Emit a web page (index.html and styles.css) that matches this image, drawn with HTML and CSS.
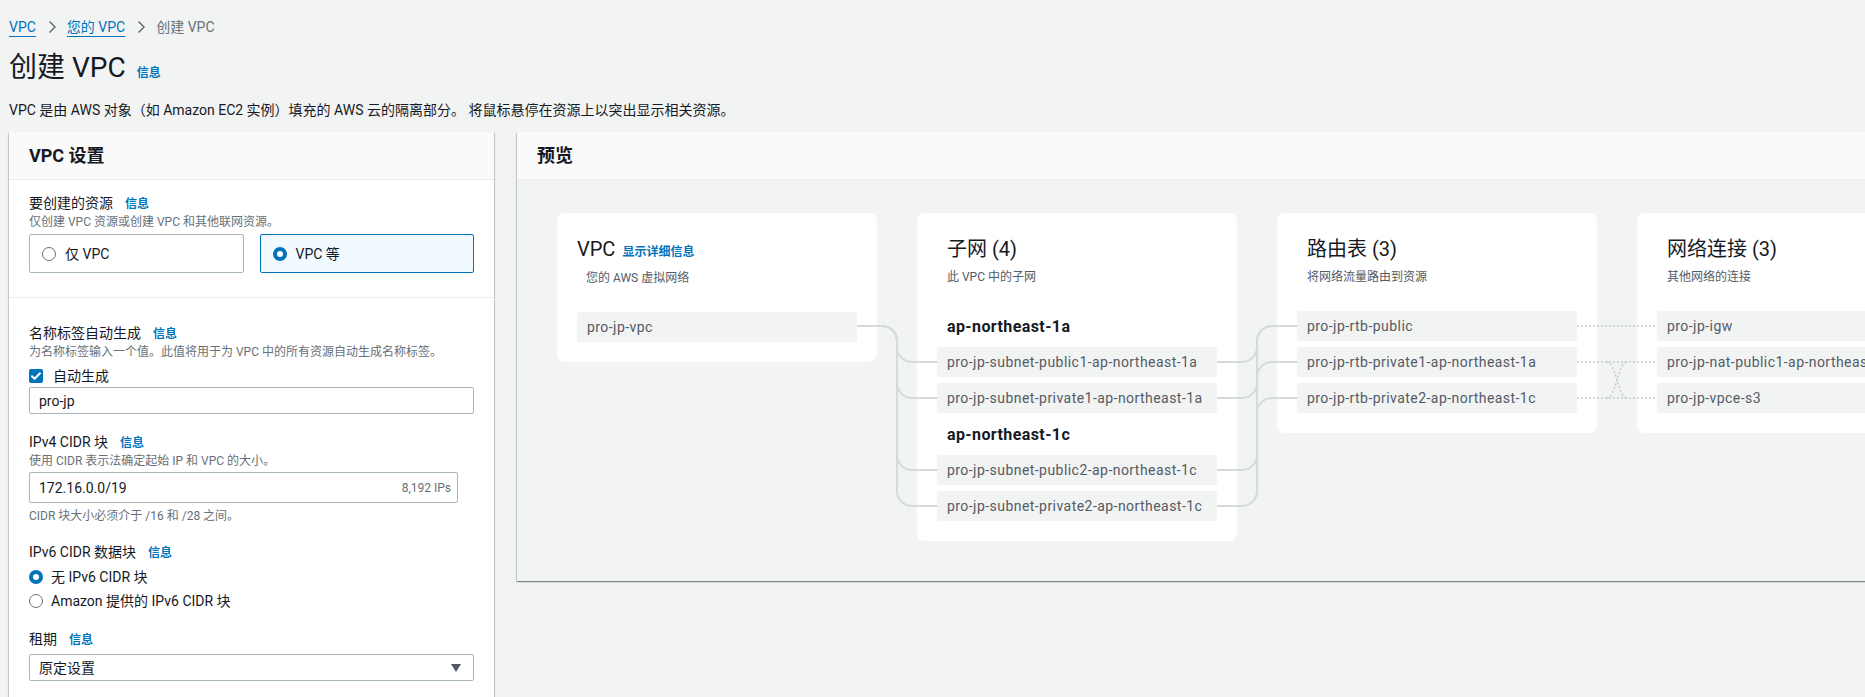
FILE: index.html
```html
<!DOCTYPE html>
<html lang="zh-CN">
<head>
<meta charset="utf-8">
<title>创建 VPC</title>
<link rel="stylesheet" href="styles.css">
</head>
<body>
<div class="page">
  <nav class="crumbs">
    <a class="crumb-link">VPC</a>
    <svg class="chev" width="16" height="16" viewBox="0 0 16 16"><path d="M5.5 2.5l5.5 5.5-5.5 5.5"/></svg>
    <a class="crumb-link">您的 VPC</a>
    <svg class="chev" width="16" height="16" viewBox="0 0 16 16"><path d="M5.5 2.5l5.5 5.5-5.5 5.5"/></svg>
    <span class="crumb-current">创建 VPC</span>
  </nav>
  <div class="title-row">
    <h1 class="title">创建 VPC</h1>
    <a class="info">信息</a>
  </div>
  <p class="desc">VPC 是由 AWS 对象（如 Amazon EC2 实例）填充的 AWS 云的隔离部分。 将鼠标悬停在资源上以突出显示相关资源。</p>

  <div class="columns">
    <section class="panel settings">
      <header class="panel-head"><h2 class="panel-title">VPC 设置</h2></header>
      <div class="section first">
        <div class="label">要创建的资源<a class="info">信息</a></div>
        <div class="hint">仅创建 VPC 资源或创建 VPC 和其他联网资源。</div>
        <div class="tiles">
          <div class="tile"><span class="radio"></span><span>仅 VPC</span></div>
          <div class="tile selected"><span class="radio on"></span><span>VPC 等</span></div>
        </div>
      </div>
      <div class="section second">
        <div class="label">名称标签自动生成<a class="info">信息</a></div>
        <div class="hint">为名称标签输入一个值。此值将用于为 VPC 中的所有资源自动生成名称标签。</div>
        <div class="check-row">
          <span class="checkbox"><svg width="14" height="14" viewBox="0 0 14 14"><path d="M3 7.2l2.6 2.6L11 4.2"/></svg></span>
          <span>自动生成</span>
        </div>
        <div class="input name-input">pro-jp</div>

        <div class="label gap">IPv4 CIDR 块<a class="info">信息</a></div>
        <div class="hint">使用 CIDR 表示法确定起始 IP 和 VPC 的大小。</div>
        <div class="input cidr-input"><span>172.16.0.0/19</span><span class="ips">8,192 IPs</span></div>
        <div class="hint constraint">CIDR 块大小必须介于 /16 和 /28 之间。</div>

        <div class="label gap">IPv6 CIDR 数据块<a class="info">信息</a></div>
        <div class="radio-row first-radio"><span class="radio on"></span><span>无 IPv6 CIDR 块</span></div>
        <div class="radio-row"><span class="radio"></span><span>Amazon 提供的 IPv6 CIDR 块</span></div>

        <div class="label gap">租期<a class="info">信息</a></div>
        <div class="input select"><span>原定设置</span><svg class="caret" width="10" height="8" viewBox="0 0 10 8"><path d="M0 0h10L5 8z"/></svg></div>
      </div>
    </section>

    <section class="panel preview">
      <header class="panel-head"><h2 class="panel-title">预览</h2></header>
      <div class="preview-body">
        <div class="diagram">
          <div class="card">
            <div class="card-head vpc-head">
              <div class="card-title-row"><span class="card-title">VPC</span><a class="detail-link">显示详细信息</a></div>
              <div class="card-sub vpc-sub">您的 AWS 虚拟网络</div>
            </div>
            <div class="items">
              <div class="item">pro-jp-vpc</div>
            </div>
          </div>

          <div class="card">
            <div class="card-head">
              <div class="card-title">子网 (4)</div>
              <div class="card-sub">此 VPC 中的子网</div>
            </div>
            <div class="items">
              <div class="az">ap-northeast-1a</div>
              <div class="item">pro-jp-subnet-public1-ap-northeast-1a</div>
              <div class="item">pro-jp-subnet-private1-ap-northeast-1a</div>
              <div class="az">ap-northeast-1c</div>
              <div class="item">pro-jp-subnet-public2-ap-northeast-1c</div>
              <div class="item">pro-jp-subnet-private2-ap-northeast-1c</div>
            </div>
          </div>

          <div class="card">
            <div class="card-head">
              <div class="card-title">路由表 (3)</div>
              <div class="card-sub">将网络流量路由到资源</div>
            </div>
            <div class="items">
              <div class="item">pro-jp-rtb-public</div>
              <div class="item">pro-jp-rtb-private1-ap-northeast-1a</div>
              <div class="item">pro-jp-rtb-private2-ap-northeast-1c</div>
            </div>
          </div>

          <div class="card">
            <div class="card-head">
              <div class="card-title">网络连接 (3)</div>
              <div class="card-sub">其他网络的连接</div>
            </div>
            <div class="items">
              <div class="item">pro-jp-igw</div>
              <div class="item">pro-jp-nat-public1-ap-northeast-1a</div>
              <div class="item">pro-jp-vpce-s3</div>
            </div>
          </div>

          <svg class="links" width="1400" height="330" viewBox="0 0 1400 330">
            <g class="solid">
              <path d="M300 113H325A15 15 0 0 1 340 128V134A15 15 0 0 0 355 149H380"/>
              <path d="M300 113H325A15 15 0 0 1 340 128V170A15 15 0 0 0 355 185H380"/>
              <path d="M300 113H325A15 15 0 0 1 340 128V242A15 15 0 0 0 355 257H380"/>
              <path d="M300 113H325A15 15 0 0 1 340 128V278A15 15 0 0 0 355 293H380"/>
              <path d="M660 149H685A15 15 0 0 0 700 134V128A15 15 0 0 1 715 113H740"/>
              <path d="M660 185H685A15 15 0 0 0 700 170V164A15 15 0 0 1 715 149H740"/>
              <path d="M660 257H685A15 15 0 0 0 700 242V128A15 15 0 0 1 715 113H740"/>
              <path d="M660 293H685A15 15 0 0 0 700 278V200A15 15 0 0 1 715 185H740"/>
            </g>
            <g class="dotted">
              <path d="M1020 113H1100"/>
              <path d="M1020 149H1100"/>
              <path d="M1020 185H1100"/>
              <path d="M1050 149C1059 149 1061 185 1070 185"/>
              <path d="M1050 185C1059 185 1061 149 1070 149"/>
            </g>
          </svg>
        </div>
      </div>
    </section>
  </div>
</div>
</body>
</html>
```

FILE: styles.css
```css
* {
  box-sizing: border-box;
}

html, body {
  margin: 0;
  padding: 0;
  overflow: hidden;
  background: #f2f3f3;
}

body {
  font-family: Roboto, "Noto Sans CJK SC", sans-serif;
  font-size: 14px;
  line-height: 20px;
  color: #16191f;
}

.page {
  padding: 17px 0 0 9px;
  width: 2100px;
}

/* breadcrumbs */
.crumbs {
  display: flex;
  align-items: center;
  height: 20px;
}

.crumb-link {
  color: #0073bb;
  text-decoration: underline;
  text-underline-offset: 4px;
  text-decoration-thickness: 1px;
}

.chev {
  margin: 0 7px 0 8px;
  fill: none;
  stroke: #687078;
  stroke-width: 1.5;
}

.crumb-current {
  color: #687078;
}

/* title */
.title-row {
  display: flex;
  align-items: baseline;
  margin-top: 13px;
  height: 36px;
}

.title {
  margin: 0;
  font-size: 28px;
  line-height: 36px;
  font-weight: 400;
  color: #16191f;
}

.info {
  color: #0073bb;
  font-size: 12px;
  font-weight: 700;
  line-height: 16px;
}

.title-row .info {
  margin-left: 11px;
}

.desc {
  margin: 14px 0 0;
  line-height: 20px;
}

/* columns */
.columns {
  display: flex;
  align-items: flex-start;
  margin-top: 12px;
  gap: 23px;
}

.panel {
  background: #fff;
  box-shadow: 0 1px 1px 0 rgba(0, 28, 36, 0.3), 1px 1px 1px 0 rgba(0, 28, 36, 0.15), -1px 1px 1px 0 rgba(0, 28, 36, 0.15);
  flex: none;
}

.panel-head {
  height: 48px;
  background: #fafafa;
  border-bottom: 1px solid #eaeded;
  display: flex;
  align-items: center;
  padding-left: 20px;
}

.panel-title {
  margin: 0;
  font-size: 18px;
  font-weight: 700;
  line-height: 22px;
}

.settings {
  width: 485px;
  padding-bottom: 40px;
}

.section {
  padding: 0 20px;
}

.section.first {
  padding-top: 13px;
  padding-bottom: 24px;
  border-bottom: 1px solid #eaeded;
}

.section.second {
  padding-top: 25px;
}

.label {
  display: flex;
  align-items: baseline;
  line-height: 20px;
  height: 20px;
}

.label .info {
  margin-left: 12px;
}

.label.gap {
  margin-top: 18px;
}

.hint {
  font-size: 12px;
  line-height: 16px;
  color: #687078;
  margin-top: 1px;
}

.hint.constraint {
  margin-top: 5px;
}

.tiles {
  display: flex;
  gap: 16px;
  margin-top: 4px;
}

.tile {
  flex: 1;
  height: 39px;
  border: 1px solid #aab7b8;
  border-radius: 2px;
  display: flex;
  align-items: center;
  padding-left: 12px;
  gap: 9px;
}

.tile.selected {
  border-color: #0073bb;
  background: #f1faff;
}

.radio {
  width: 14px;
  height: 14px;
  border-radius: 50%;
  border: 1.5px solid #687078;
  background: #fff;
  flex: none;
}

.radio.on {
  border: 4px solid #0073bb;
}

.check-row {
  display: flex;
  align-items: center;
  gap: 10px;
  height: 20px;
  margin-top: 6px;
}

.checkbox {
  width: 14px;
  height: 14px;
  border-radius: 2px;
  background: #0073bb;
  display: flex;
}

.checkbox path {
  fill: none;
  stroke: #fff;
  stroke-width: 2;
  stroke-linecap: round;
  stroke-linejoin: round;
}

.input {
  border: 1px solid #aab7b8;
  border-radius: 2px;
  background: #fff;
  display: flex;
  align-items: center;
  padding: 0 12px 0 9px;
}

.name-input {
  height: 27px;
  margin-top: 1px;
}

.cidr-input {
  width: 429px;
  height: 31px;
  margin-top: 3px;
  justify-content: space-between;
  padding-right: 6px;
}

.ips {
  font-size: 12px;
  color: #687078;
}

.radio-row {
  display: flex;
  align-items: center;
  gap: 8px;
  height: 20px;
  margin-top: 4px;
}

.radio-row.first-radio {
  margin-top: 5px;
}

.select {
  height: 27px;
  margin-top: 5px;
  justify-content: space-between;
}

.caret {
  fill: #545b64;
}

/* preview */
.preview {
  width: 1480px;
}

.preview-body {
  background: #f2f3f3;
  padding: 33px 40px 40px;
}

.diagram {
  position: relative;
  display: flex;
  align-items: flex-start;
  gap: 40px;
}

.card {
  width: 320px;
  background: #fff;
  border-radius: 8px;
  padding: 24px 20px 20px;
  flex: none;
}

.card-head {
  padding-left: 10px;
}

.card-head.vpc-head {
  padding-left: 0;
}

.card-title-row {
  display: flex;
  align-items: baseline;
  gap: 7px;
}

.card-title {
  font-size: 20px;
  line-height: 24px;
  color: #16191f;
}

.detail-link {
  color: #0073bb;
  font-size: 12px;
  font-weight: 700;
}

.card-sub {
  margin-top: 8px;
  font-size: 12px;
  line-height: 16px;
  color: #545b64;
}

.vpc-sub {
  padding-left: 9px;
}

.items {
  margin-top: 26px;
  display: flex;
  flex-direction: column;
  gap: 6px;
}

.item {
  height: 30px;
  line-height: 30px;
  background: #f2f3f3;
  border-radius: 2px;
  padding: 0 10px;
  color: #545b64;
  white-space: nowrap;
  overflow: hidden;
  letter-spacing: 0.45px;
}

.az {
  height: 30px;
  padding: 4px 0 0 10px;
  line-height: 24px;
  font-size: 16px;
  font-weight: 700;
  color: #16191f;
  letter-spacing: 0.4px;
}

.links {
  position: absolute;
  left: 0;
  top: 0;
  pointer-events: none;
}

.links .solid path {
  fill: none;
  stroke: #d5dbdb;
  stroke-width: 2;
}

.links .dotted path {
  fill: none;
  stroke: #c6cccd;
  stroke-width: 1.5;
  stroke-dasharray: 2 2;
}
```
